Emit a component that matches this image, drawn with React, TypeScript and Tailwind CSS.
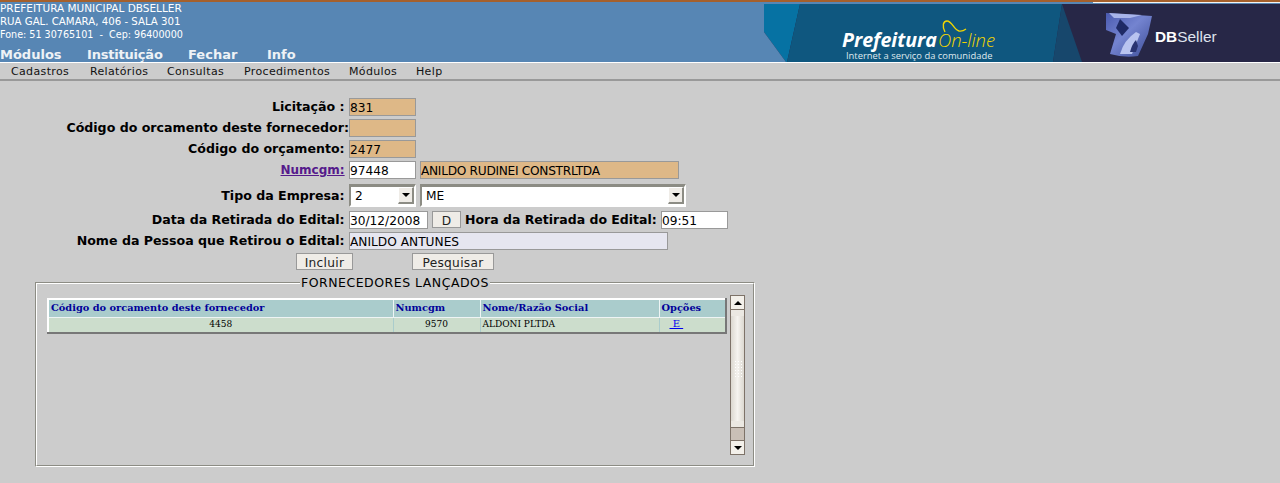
import React from "react";

const inputBase = "h-[18px] border border-[#999999] text-[12.2px] leading-[18px] text-black overflow-hidden whitespace-nowrap box-border";

function Field({ w, bg, children }: { w: string; bg: string; children?: React.ReactNode }) {
  return <div className={`${inputBase} ${w} ${bg}`}>{children}</div>;
}

function Label({ children }: { children: React.ReactNode }) {
  return <div className="w-[349px] shrink-0 text-right text-[12.6px] font-bold leading-[18px] text-black whitespace-nowrap">{children}</div>;
}

function Select({ w, value }: { w: string; value: string }) {
  return (
    <div className={`${w} h-[23px] flex items-stretch box-border border-2 border-t-[3px] border-[#8c8c84] border-r-white border-b-white bg-white pl-[4px] text-[12.2px] leading-[18px] text-black`}>
      <span className="flex-1">{value}</span>
      <span className="w-[16px] h-[17px] flex items-center justify-center box-border bg-[#efece7] border border-white border-r-[#8c8c84] border-b-[#8c8c84] border-r-2 border-b-2">
        <svg width="8" height="4" viewBox="0 0 8 4"><path d="M0 0h8L4 4z" fill="#000" /></svg>
      </span>
    </div>
  );
}

function Btn({ w, children }: { w: string; children: React.ReactNode }) {
  return <div className={`${w} h-[17px] box-border border border-[#999999] bg-[#efece7] text-center text-[12.2px] tracking-[0.3px] leading-[18px] text-[#222222]`}>{children}</div>;
}

function ScrollArrow({ up }: { up?: boolean }) {
  return (
    <div className="h-[13px] bg-[#f3f0ea] flex items-center justify-center shrink-0">
      <svg width="8" height="4" viewBox="0 0 8 4">
        <path d={up ? "M0 4h8L4 0z" : "M0 0h8L4 4z"} fill="#000" />
      </svg>
    </div>
  );
}

function Logo() {
  return (
    <svg width="516" height="58" viewBox="0 0 516 58" className="block">
      <defs>
        <linearGradient id="mark" x1="0" y1="0" x2="1" y2="1">
          <stop offset="0" stopColor="#4a5ab0" />
          <stop offset="0.45" stopColor="#7484d0" />
          <stop offset="1" stopColor="#3c4c96" />
        </linearGradient>
      </defs>
      <rect width="516" height="58" fill="#272747" />
      <polygon points="0,0 36,0 23,58 22,58 0,28" fill="#0672a3" />
      <polygon points="36,0 298,0 289,58 23,58" fill="#0f577f" />
      <polygon points="298,0 318,58 289,58" fill="#17476c" />
      <polygon points="0,28 22,58 0,58" fill="#5786b4" />
      <path d="M342 9 L388 12 L384 30 L374 52 Q360 54 346 50 L352 30 L342 26 Z" fill="url(#mark)" />
      <path d="M356 15 L365 24 L358 32 L352 24 Z" fill="#1f2a66" />
      <path d="M345 9 L378 11 L366 14 L350 14 Z" fill="#a8b4ea" />
      <path d="M356 50 Q360 36 372 28 L376 30 L368 50 Z" fill="#b9c4f0" />
      <path d="M366 48 Q368 40 372 36 L374 42 L372 48 Z" fill="#2a3472" />
      <path d="M181 28 C178 22 179 17 183 17 C188 17 190 26 195 27 C198 27.500 200 26.500 202 25" fill="none" stroke="#f2d500" strokeWidth="1.400" />
    </svg>
  );
}

export default function App() {
  return (
    <div className="w-[1280px] h-[483px] bg-[#cccccc] overflow-hidden font-['DejaVu_Sans',sans-serif]">
      <div className="h-[62px] bg-[#5786b4] border-t-2 border-[#a5602c] relative flex flex-col">
        <div className="text-white leading-[13px] pt-0 whitespace-nowrap">
          <div className="text-[10.5px]">PREFEITURA MUNICIPAL DBSELLER</div>
          <div className="text-[10.2px]">RUA GAL. CAMARA, 406 - SALA 301</div>
          <div className="text-[9.6px] whitespace-pre">Fone: 51 30765101  -  Cep: 96400000</div>
        </div>
        <div className="flex text-[13px] font-bold text-[#eef2f6] mt-[6px] leading-[16px]">
          <span className="w-[87px]">Módulos</span>
          <span className="w-[101px] tracking-[-0.2px]">Instituição</span>
          <span className="w-[79px]">Fechar</span>
          <span>Info</span>
        </div>
        <div className="absolute right-0 top-0 w-[187px] h-px bg-[#f4f4f4]" />
        <div className="absolute right-0 top-[2px]"><Logo /></div>
        <span className="absolute left-[842px] top-[28px] text-[19.6px] font-bold italic leading-[20px] text-white font-['Open_Sans',sans-serif] whitespace-nowrap">Prefeitura</span>
        <span className="absolute left-[938px] top-[28px] text-[18.4px] font-light italic leading-[20px] text-[#f2d500] font-['Open_Sans',sans-serif] whitespace-nowrap">On-line</span>
        <span className="absolute left-[846px] top-[49px] text-[9.4px] leading-[10px] text-[#dfe8ee] font-['Open_Sans',sans-serif] whitespace-nowrap">Internet a serviço da comunidade</span>
        <span className="absolute left-[1155px] top-[26px] text-[15.4px] leading-[18px] text-[#dfe3ee] font-['Liberation_Sans',sans-serif] whitespace-nowrap"><b className="text-white">DB</b>Seller</span>
      </div>

      <div className="h-[19px] border-t border-white border-b-2 border-b-[#999999] bg-[#cccccc] flex items-center pt-px pl-[1px] text-[11px] tracking-[0.35px] leading-[16px] text-[#111111]">
        <span className="ml-[10px] w-[79px]">Cadastros</span>
        <span className="w-[77px]">Relatórios</span>
        <span className="w-[77px]">Consultas</span>
        <span className="w-[105px]">Procedimentos</span>
        <span className="w-[67px]">Módulos</span>
        <span>Help</span>
      </div>

      <div className="pt-[17px] flex flex-col">
        <div className="flex h-[21px]">
          <Label>Licitação :&nbsp;</Label>
          <Field w="w-[67px]" bg="bg-[#deb887]">831</Field>
        </div>
        <div className="flex h-[21px]">
          <Label>Código do orcamento deste fornecedor:</Label>
          <Field w="w-[67px]" bg="bg-[#deb887]" />
        </div>
        <div className="flex h-[21px]">
          <Label>Código do orçamento:&nbsp;</Label>
          <Field w="w-[67px]" bg="bg-[#deb887]">2477</Field>
        </div>
        <div className="flex h-[23px]">
          <Label><span className="text-[12px] text-[#551a8b] underline">Numcgm:</span>&nbsp;</Label>
          <div className="flex gap-[4px]">
            <Field w="w-[67px]" bg="bg-white">97448</Field>
            <Field w="w-[259px]" bg="bg-[#deb887]"><span className="tracking-[-0.3px]">ANILDO RUDINEI CONSTRLTDA</span></Field>
          </div>
        </div>
        <div className="flex h-[27px] items-start">
          <div className="pt-[3px]"><Label>Tipo da Empresa:&nbsp;</Label></div>
          <div className="flex gap-[4px]">
            <Select w="w-[67px]" value="2" />
            <Select w="w-[266px]" value="ME" />
          </div>
        </div>
        <div className="flex h-[21px]">
          <Label>Data da Retirada do Edital:&nbsp;</Label>
          <div className="flex">
            <Field w="w-[79px]" bg="bg-white">30/12/2008</Field>
            <div className="ml-[4px]"><Btn w="w-[29px]">D</Btn></div>
            <span className="ml-[4px] w-[196px] shrink-0 text-[12.5px] font-bold leading-[18px] text-black whitespace-nowrap">Hora da Retirada do Edital:</span>
            <Field w="w-[67px]" bg="bg-white">09:51</Field>
          </div>
        </div>
        <div className="flex h-[21px]">
          <Label>Nome da Pessoa que Retirou o Edital:&nbsp;</Label>
          <Field w="w-[319px]" bg="bg-[#e6e6f0]">ANILDO ANTUNES</Field>
        </div>
        <div className="flex h-[22px] pl-[296px]">
          <Btn w="w-[57px]">Incluir</Btn>
          <div className="ml-[59px]"><Btn w="w-[82px]">Pesquisar</Btn></div>
        </div>

        <div className="relative ml-[35px] mt-[7px] w-[720px] h-[185px] box-border border border-[#8c8c84] border-r-white border-b-white">
          <div className="h-full w-full box-border border border-white border-r-[#8c8c84] border-b-[#8c8c84] flex pl-[10px] pt-[11px]">
            <div className="w-[683px] shrink-0 pt-[3px]">
              <table className="w-[678px] table-fixed border-collapse font-['DejaVu_Serif',serif] text-[9.8px] border-2 border-t-white border-l-white border-r-[#777777] border-b-[#777777]">
                <colgroup>
                  <col className="w-[345px]" />
                  <col className="w-[87px]" />
                  <col className="w-[179px]" />
                  <col className="w-[67px]" />
                </colgroup>
                <tbody>
                  <tr className="h-[18px] bg-[#aacccc] text-[#000099] font-bold">
                    <td className="px-[2px] border border-[#eef4f4] border-l-[#777777] border-t-[#777777] whitespace-nowrap">Código do orcamento deste fornecedor</td>
                    <td className="px-[2px] border border-[#eef4f4] border-l-[#777777] border-t-[#777777]">Numcgm</td>
                    <td className="px-[2px] border border-[#eef4f4] border-l-[#777777] border-t-[#777777]">Nome/Razão Social</td>
                    <td className="px-[2px] border border-[#eef4f4] border-l-[#777777] border-t-[#777777]">Opções</td>
                  </tr>
                  <tr className="h-[16px] bg-[#ccddcc] text-black text-[9px] leading-[12px]">
                    <td className="pb-[2px] text-center border border-[#aacccc]">4458</td>
                    <td className="pb-[2px] text-center border border-[#aacccc]">9570</td>
                    <td className="pb-[2px] px-[2px] border border-[#aacccc]">ALDONI PLTDA</td>
                    <td className="pb-[2px] px-[2px] border border-[#aacccc]"><span className="ml-[8px] text-[#0000ee] underline whitespace-pre text-[10px]"> E </span></td>
                  </tr>
                </tbody>
              </table>
            </div>
            <div className="w-[15px] h-[160px] box-border border border-[#7d7268] flex flex-col">
              <ScrollArrow up />
              <div className="h-px bg-[#7d7268] shrink-0" />
              <div className="flex-1 bg-gradient-to-r from-[#dcd8d0] via-[#f5f3ef] to-[#dcd8d0] border-y-[6px] border-[#ebe8e2] flex items-center justify-center">
                <div className="w-[8px] h-[18px] bg-[radial-gradient(#ffffff_1px,transparent_1px)] bg-[length:3px_3px]" />
              </div>
              <div className="h-px bg-[#7d7268] shrink-0" />
              <div className="h-[12px] bg-[#c9bfb6] shrink-0" />
              <div className="h-px bg-[#7d7268] shrink-0" />
              <ScrollArrow />
            </div>
          </div>
          <span className="absolute left-[264px] -top-[8px] bg-[#cccccc] px-px text-[12.5px] tracking-[0.5px] leading-[15px] text-black whitespace-pre">FORNECEDORES LANÇADOS</span>
        </div>
      </div>
    </div>
  );
}
